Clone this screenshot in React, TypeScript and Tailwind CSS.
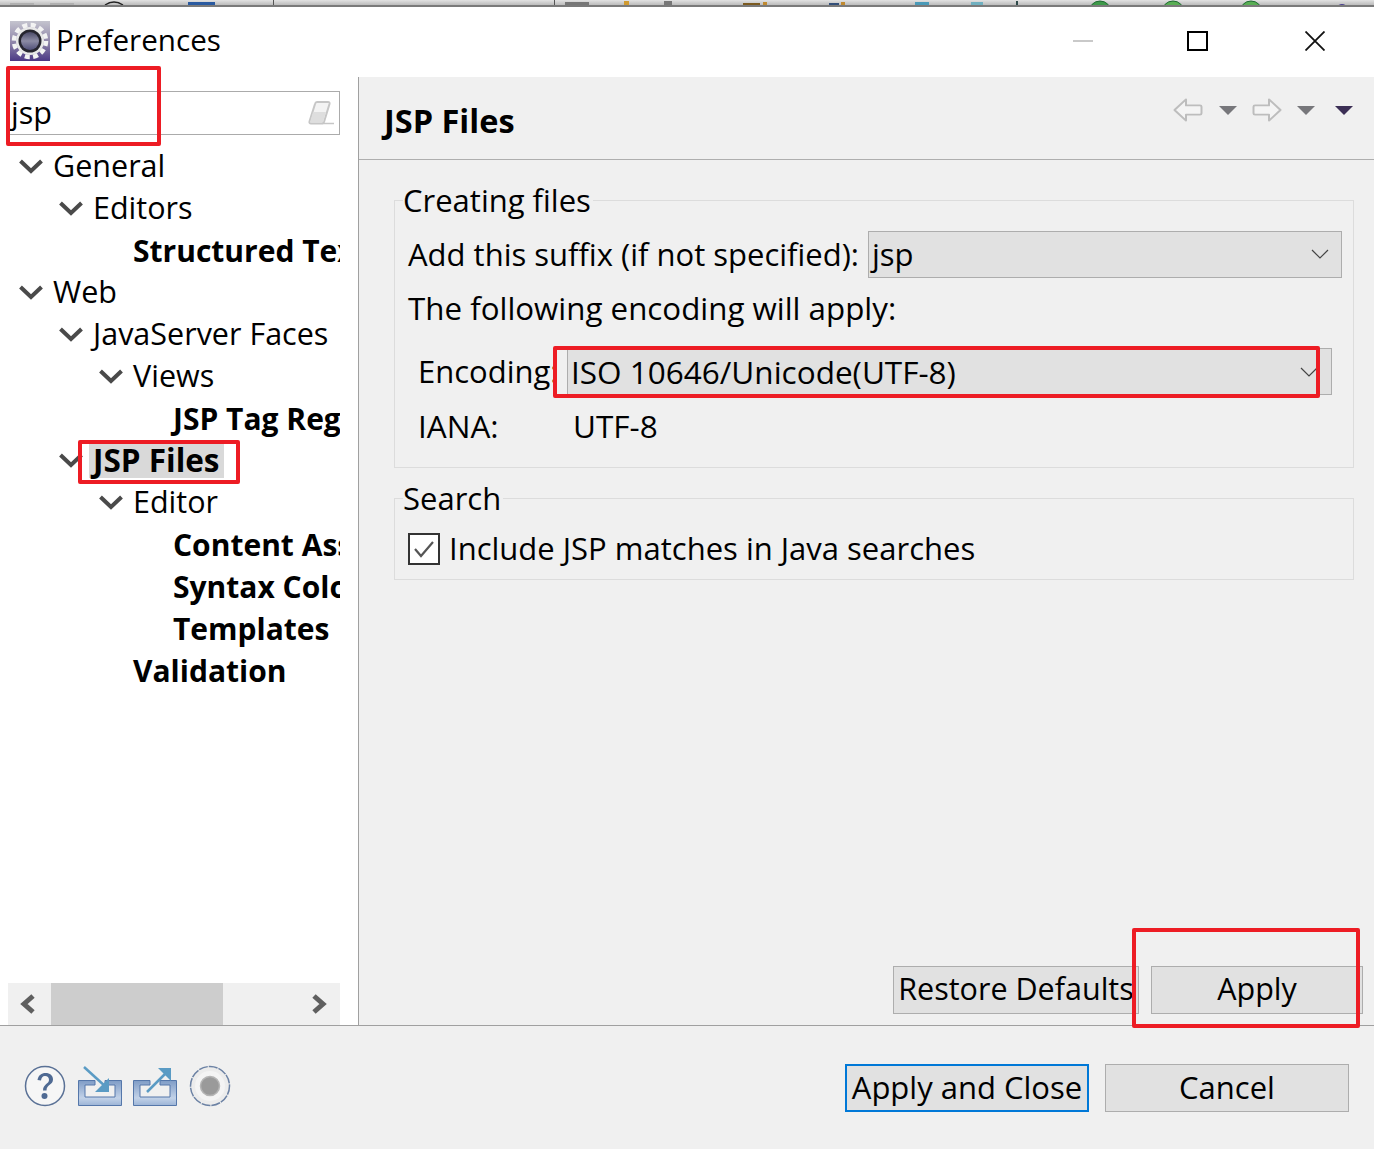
import type { ReactNode } from 'react'

const FONT = "font-['Open_Sans','Noto_Sans',sans-serif]"

const tree = [
  { label: 'General', depth: 0, open: true },
  { label: 'Editors', depth: 1, open: true },
  { label: 'Structured Text', depth: 2, bold: true },
  { label: 'Web', depth: 0, open: true },
  { label: 'JavaServer Faces', depth: 1, open: true },
  { label: 'Views', depth: 2, open: true },
  { label: 'JSP Tag Registry', depth: 3, bold: true },
  { label: 'JSP Files', depth: 1, open: true, bold: true, selected: true },
  { label: 'Editor', depth: 2, open: true },
  { label: 'Content Assist', depth: 3, bold: true },
  { label: 'Syntax Coloring', depth: 3, bold: true },
  { label: 'Templates', depth: 3, bold: true },
  { label: 'Validation', depth: 2, bold: true },
]

const depthPad = ['pl-[19px]', 'pl-[59px]', 'pl-[99px]', 'pl-[139px]']

function Chevron() {
  return (
    <svg width="24" height="16" viewBox="0 0 24 16" className="shrink-0">
      <path d="M1.500 3 12 13 22.500 3" fill="none" stroke="#4a4a4a" strokeWidth="4" />
    </svg>
  )
}

function BehindStrip() {
  return (
    <svg width="1374" height="5" viewBox="0 0 1374 5" className="block">
      <path d="M105 5q9-6 18 0" fill="none" stroke="#222" strokeWidth="1.500" />
      <rect x="10" y="3" width="24" height="2" fill="#b0b0b0" />
      <rect x="50" y="3" width="24" height="2" fill="#b0b0b0" />
      <rect x="188" y="2" width="27" height="3" fill="#2a5aa0" />
      <rect x="273" width="1" height="5" fill="#555" />
      <rect x="554" width="1" height="5" fill="#555" />
      <rect x="565" y="2" width="24" height="3" fill="#777" />
      <rect x="624" y="1" width="5" height="4" fill="#d09a30" />
      <rect x="664" y="1" width="8" height="4" fill="#777" />
      <rect x="743" y="3" width="17" height="2" fill="#7b5a20" />
      <rect x="763" y="2" width="4" height="3" fill="#c08a30" />
      <rect x="829" y="3" width="10" height="2" fill="#34507a" />
      <rect x="841" y="2" width="4" height="3" fill="#c08a30" />
      <rect x="915" y="2" width="14" height="3" fill="#4a9ab8" />
      <rect x="971" y="2" width="12" height="3" fill="#70b0c0" />
      <rect x="1016" y="1" width="2" height="4" fill="#2f4a4a" />
      <circle cx="1100" cy="12" r="11" fill="#3f9a4a" stroke="#1f6a34" />
      <circle cx="1173" cy="12" r="11" fill="#5aae54" stroke="#1f6a34" />
      <circle cx="1251" cy="12" r="11" fill="#5aae54" stroke="#1f6a34" />
      <circle cx="1342" cy="10" r="6" fill="#4a3f90" />
    </svg>
  )
}

function Eclipse() {
  return (
    <svg width="40" height="40" viewBox="0 0 40 40" className="shrink-0">
      <defs>
        <linearGradient id="bgGrad" x1="0" y1="0" x2="0" y2="1">
          <stop offset="0" stopColor="#c4c4ce" />
          <stop offset="0.55" stopColor="#8d83a8" />
          <stop offset="1" stopColor="#4b3885" />
        </linearGradient>
        <linearGradient id="lensGrad" x1="0" y1="0" x2="0" y2="1">
          <stop offset="0" stopColor="#4b4a68" />
          <stop offset="0.5" stopColor="#8c8ba4" />
          <stop offset="1" stopColor="#504f78" />
        </linearGradient>
      </defs>
      <rect width="40" height="40" fill="url(#bgGrad)" />
      <circle cx="20" cy="20" r="16" fill="none" stroke="#f3f3f3" strokeWidth="4.500" strokeDasharray="5 3.400" />
      <circle cx="20" cy="20" r="14" fill="#e8e8e8" />
      <circle cx="20" cy="20" r="11.500" fill="#26252f" />
      <circle cx="20" cy="20" r="9" fill="url(#lensGrad)" />
    </svg>
  )
}

function Eraser() {
  return (
    <svg width="28" height="26" viewBox="0 0 28 26">
      <path d="M9 2h11q2 0 1.500 2L16 22q-.5 1.500-2 1.500H3q-2 0-1.500-2L7 4q.5-2 2-2Z" fill="#f3f3f3" stroke="#c6c6c6" strokeWidth="2" />
      <path d="M5 12h13l-3.200 10.500H2Z" fill="#dedede" />
      <path d="M14 23.500h12" stroke="#c6c6c6" strokeWidth="1.500" />
    </svg>
  )
}

function Arrow({ flip }: { flip?: boolean }) {
  return (
    <svg width="30" height="24" viewBox="0 0 30 26" preserveAspectRatio="none" style={flip ? { transform: 'scaleX(-1)' } : undefined} className="block">
      <path d="M1.500 13 13 1.500V8h14q1.500 0 1.500 1.500v7q0 1.500-1.500 1.500H13v6.500Z" fill="#f4f4f4" stroke="#bdbdbd" strokeWidth="2" strokeLinejoin="round" />
    </svg>
  )
}

function Tri({ dark }: { dark?: boolean }) {
  return (
    <svg width="20" height="10" viewBox="0 0 20 10" className="block">
      <path d="M1 1h18L10 10Z" fill={dark ? '#3c2f55' : '#77777b'} />
    </svg>
  )
}

function ComboCaret() {
  return (
    <svg width="18" height="10" viewBox="0 0 18 10">
      <path d="M1 1l8 8 8-8" fill="none" stroke="#444" strokeWidth="1.200" />
    </svg>
  )
}

function Tray({ id, children }: { id: string; children: ReactNode }) {
  return (
    <svg width="44" height="40" viewBox="0 0 44 40">
      <defs>
        <linearGradient id={id} x1="0" y1="0" x2="0" y2="1">
          <stop offset="0" stopColor="#7f9cc6" />
          <stop offset="0.7" stopColor="#c2d2e8" />
          <stop offset="1" stopColor="#9cb4d6" />
        </linearGradient>
      </defs>
      <path d="M.5 14.500H17V19H7V31H37V19H27v-4.500H43.500V39.500H.5Z" fill={`url(#${id})`} stroke="#5577aa" />
      {children}
    </svg>
  )
}

function Group({ title, children, className }: { title: string; children: ReactNode; className: string }) {
  return (
    <fieldset className={`relative border border-[#dcdcdc] ${className}`}>
      <span className="absolute left-[8px] top-[-17px] bg-[#f0f0f0] pr-[2px] text-[31px] leading-[32px]">{title}</span>
      {children}
    </fieldset>
  )
}

function Button({ children, className }: { children: ReactNode; className: string }) {
  return (
    <div className={`flex h-[48px] items-center justify-center border border-[#adadad] bg-[#e1e1e1] pb-[2px] ${className}`}>
      {children}
    </div>
  )
}

function RedBox({ className }: { className: string }) {
  return <div className={`pointer-events-none absolute rounded-[2px] border-[4px] border-[#ed1c24] ${className}`} />
}

function TitleBar() {
  return (
    <div className="flex h-[70px] items-center bg-white pb-[2px] pl-[10px]">
      <Eclipse />
      <span className="ml-[6px] pb-[2px] text-[29.6px]">Preferences</span>
      <div className="ml-auto flex items-center">
        <div className="mr-[94px] h-[2px] w-[20px] bg-[#c9c9c9]" />
        <div className="mr-[97px] h-[20px] w-[21px] border-2 border-black" />
        <svg width="20" height="20" viewBox="0 0 20 20" className="mr-[49px]">
          <path d="M.500.500l19 19M19.500.500l-19 19" stroke="#111" strokeWidth="1.800" />
        </svg>
      </div>
    </div>
  )
}

function Sidebar() {
  return (
    <div className="flex w-[359px] shrink-0 flex-col border-r border-[#a0a0a0] bg-white">
      <div className="ml-[8px] mt-[14px] flex h-[44px] w-[332px] items-center justify-between border border-[#ababab] pl-[2px] pr-[3px]">
        <span className="text-[30.5px]">jsp</span>
        <Eraser />
      </div>
      <div className="mt-[10px] w-[340px] flex-1 overflow-hidden">
        {tree.map((row) => (
          <div key={row.label} className={`flex h-[42px] items-center whitespace-nowrap ${depthPad[row.depth]}`}>
            {row.open ? <Chevron /> : <span className="w-[24px] shrink-0" />}
            {row.selected ? (
              <span className="mb-[1px] ml-[6px] bg-[#d9d9d9] px-[4px] text-[31.5px] font-bold leading-[37px]">{row.label}</span>
            ) : (
              <span className={`ml-[10px] ${row.bold ? 'text-[30px] font-bold' : 'text-[30.5px]'}`}>{row.label}</span>
            )}
          </div>
        ))}
      </div>
      <div className="ml-[8px] flex h-[42px] w-[332px] items-center bg-[#f0f0f0]">
        <svg width="18" height="20" viewBox="0 0 18 20" className="ml-[11px]">
          <path d="M14 2 5 10l9 8" fill="none" stroke="#5f5f5f" strokeWidth="5" />
        </svg>
        <div className="ml-[14px] h-full w-[172px] bg-[#cdcdcd]" />
        <svg width="18" height="20" viewBox="0 0 18 20" className="ml-[87px]">
          <path d="M4 2l9 8-9 8" fill="none" stroke="#5f5f5f" strokeWidth="5" />
        </svg>
      </div>
    </div>
  )
}

function Content() {
  return (
    <div className="flex min-w-0 flex-1 flex-col bg-[#f0f0f0]">
      <div className="flex h-[83px] items-start border-b border-[#aeaeae] pl-[25px]">
        <span className="mt-[23px] text-[32.5px] font-bold leading-[42px]">JSP Files</span>
        <div className="ml-auto mt-[21px] flex items-center pr-[20px]">
          <Arrow />
          <span className="ml-[15px]"><Tri /></span>
          <span className="ml-[14px]"><Arrow flip /></span>
          <span className="ml-[14px]"><Tri /></span>
          <span className="ml-[18px]"><Tri dark /></span>
        </div>
      </div>
      <div className="flex flex-1 flex-col pl-[35px] pr-[20px]">
        <Group title="Creating files" className="mt-[40px] h-[268px] w-[960px] pl-[13px]">
          <div className="mt-[29px] flex h-[48px] items-center">
            <span className="text-[31px]">Add this suffix (if not specified):</span>
            <div className="ml-auto mr-[11px] flex h-[47px] w-[474px] items-center justify-between border border-[#adadad] bg-[#e1e1e1] pl-[3px] pr-[12px]">
              <span className="text-[31px]">jsp</span>
              <ComboCaret />
            </div>
          </div>
          <div className="mt-[6px] h-[48px] text-[31.3px] leading-[48px]">The following encoding will apply:</div>
          <div className="ml-[10px] mt-[16px] flex h-[47px] items-center">
            <span className="w-[149px] text-[31px]">Encoding:</span>
            <div className="mr-[21px] flex h-[47px] flex-1 items-center justify-between border border-[#adadad] bg-[#e1e1e1] pl-[3px] pr-[13px]">
              <span className="text-[31.5px]">ISO 10646/Unicode(UTF-8)</span>
              <ComboCaret />
            </div>
          </div>
          <div className="ml-[10px] mt-[7px] flex h-[47px] items-center text-[31.5px]">
            <span className="w-[155px]">IANA:</span>
            <span>UTF-8</span>
          </div>
        </Group>
        <Group title="Search" className="mt-[30px] h-[82px] w-[960px] pl-[13px]">
          <div className="mt-[26px] flex h-[48px] items-center">
            <div className="flex h-[32px] w-[32px] items-center justify-center border-2 border-[#333] bg-white">
              <svg width="24" height="20" viewBox="0 0 24 20">
                <path d="M3 10l6 7L21 3" fill="none" stroke="#555" strokeWidth="2.200" />
              </svg>
            </div>
            <span className="ml-[9px] pb-[2px] text-[31px]">Include JSP matches in Java searches</span>
          </div>
        </Group>
        <div className="mb-[11px] mt-auto flex justify-end gap-[12px] text-[30.5px]">
          <Button className="w-[246px]">Restore Defaults</Button>
          <Button className="-mr-[9px] w-[212px]">Apply</Button>
        </div>
      </div>
    </div>
  )
}

function Footer() {
  return (
    <div className="flex h-[124px] items-start border-t border-[#a0a0a0] bg-[#f0f0f0] pl-[24px] pr-[25px] pt-[38px] text-[31px]">
      <div className="flex items-center pt-[1px]">
        <svg width="42" height="42" viewBox="0 0 42 42">
          <circle cx="21" cy="21" r="19.500" fill="#f6f6f6" stroke="#5a7196" strokeWidth="1.500" />
          <path d="M13.500 15c1-5 4-7 8-7 4.500 0 7.500 2.500 7.500 6.500 0 5.500-6.500 5-6.500 11h-3.500c0-6.500 6-6.500 6-10.500 0-2.500-1.500-4-4-4-2.500 0-3.500 1.500-4 4.500Z" fill="#4f6a93" />
          <circle cx="20.500" cy="31" r="3" fill="#4f6a93" />
        </svg>
        <div className="ml-[12px]">
          <Tray id="trayIn">
            <path d="M6 1l22 20" stroke="#5a9bc4" strokeWidth="2.500" />
            <path d="M17 26h14V12Z" fill="#5a9bc4" />
          </Tray>
        </div>
        <div className="ml-[11px]">
          <Tray id="trayOut">
            <path d="M14 26 35 5" stroke="#5a9bc4" strokeWidth="2.500" />
            <path d="M25 2h13v13Z" fill="#5a9bc4" />
          </Tray>
        </div>
        <svg width="42" height="42" viewBox="0 0 42 42" className="ml-[12px]">
          <circle cx="21" cy="21" r="19.500" fill="#ececec" stroke="#6c82a4" strokeWidth="1.500" strokeDasharray="9 1" />
          <circle cx="21" cy="21" r="15" fill="#f4f4f4" />
          <circle cx="21" cy="21" r="9.500" fill="#9a9a9a" stroke="#b5b5b5" strokeWidth="1.500" />
        </svg>
      </div>
      <div className="ml-auto flex gap-[16px]">
        <Button className="w-[244px] !border-2 !border-[#0078d7]">Apply and Close</Button>
        <Button className="w-[244px]">Cancel</Button>
      </div>
    </div>
  )
}

export default function App() {
  return (
    <div className={`relative flex h-[1149px] w-[1374px] flex-col overflow-hidden bg-white text-black ${FONT}`}>
      <div className="h-[7px] shrink-0 overflow-hidden border-b-2 border-[#7a7a7a] bg-gradient-to-b from-[#e2e2e2] to-[#bcbcbc]">
        <BehindStrip />
      </div>
      <TitleBar />
      <div className="flex min-h-0 flex-1">
        <Sidebar />
        <Content />
      </div>
      <Footer />
      <RedBox className="left-[6px] top-[66px] h-[80px] w-[155px]" />
      <RedBox className="left-[78px] top-[440px] h-[44px] w-[162px]" />
      <RedBox className="left-[553px] top-[346px] h-[52px] w-[767px]" />
      <RedBox className="left-[1132px] top-[928px] h-[100px] w-[228px]" />
    </div>
  )
}
